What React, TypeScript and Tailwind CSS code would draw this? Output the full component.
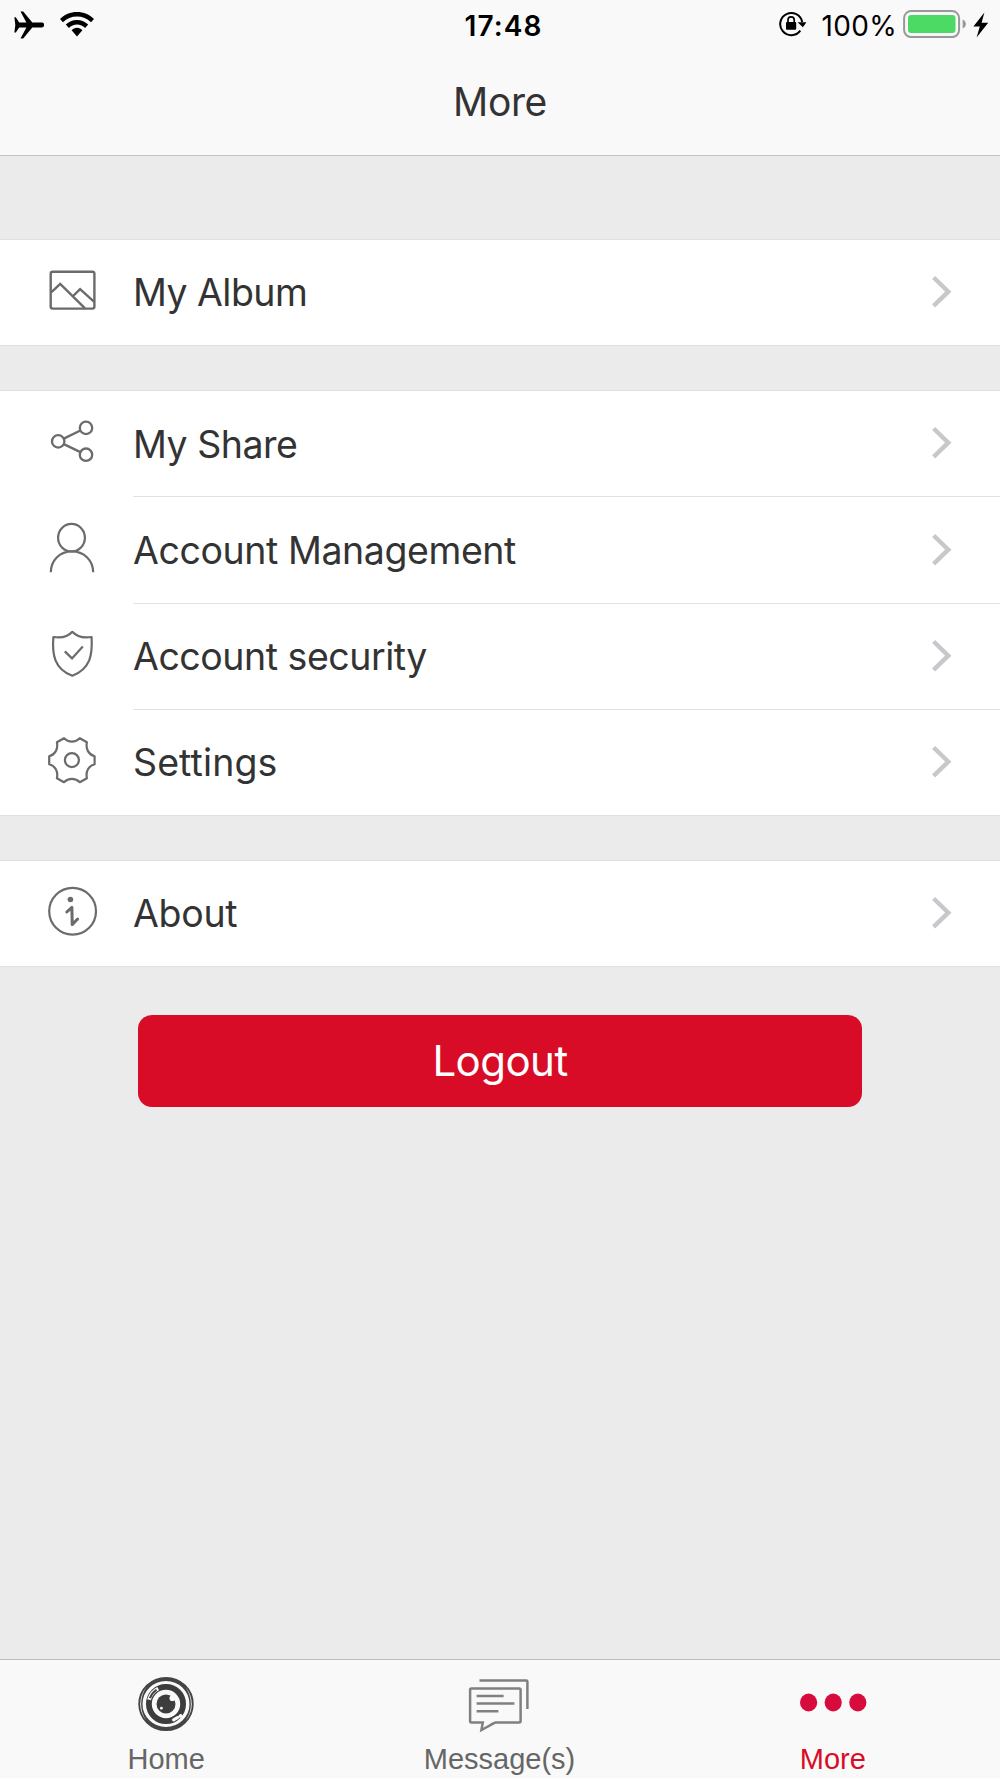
import type { FC, ReactNode } from 'react';

import cx from 'clsx';

type MenuItem = {
  id: string;
  label: string;
  labelClassName: string;
  icon: ReactNode;
};

type TabProps = {
  label: string;
  icon: ReactNode;
  active?: boolean;
};

const AlbumIcon: FC = () => (
  <svg className="w-14 h-14" viewBox="0 0 56 56" fill="none" stroke="#6b6b6b" strokeWidth="2.4">
    <rect x="6.7" y="7.8" width="43.7" height="36.8" rx="2" />
    <path d="M7.5 28.2 16.2 19.9 40.8 44.2M29.1 32 36.1 25.1 50.2 37.8" />
  </svg>
);

const ShareIcon: FC = () => (
  <svg className="w-14 h-14" viewBox="0 0 56 56" fill="none" stroke="#6b6b6b" strokeWidth="2.3">
    <circle cx="42" cy="11.9" r="6.2" />
    <circle cx="14.2" cy="25.4" r="6.2" />
    <circle cx="42" cy="38.7" r="6.2" />
    <path d="M19.8 22.6 36.4 14.5M19.8 28.1 36.4 36.1" />
  </svg>
);

const AccountIcon: FC = () => (
  <svg className="w-14 h-14" viewBox="0 0 56 56" fill="none" stroke="#6b6b6b" strokeWidth="2.2">
    <ellipse cx="27.5" cy="15.7" rx="13.4" ry="13.8" />
    <path d="M6.8 50.2C7 38 16 29.4 27.9 29.4S49 38 49.2 50.2" />
  </svg>
);

const SecurityIcon: FC = () => (
  <svg className="w-14 h-14" viewBox="0 0 56 56" fill="none" stroke="#6b6b6b" strokeWidth="2.2">
    <path
      strokeLinejoin="round"
      d="M28.3 3.8C24 8.6 17.6 10.4 9.4 9 8.6 18 8.7 25.2 11.5 32.4 14.6 40 20.5 45 28.3 47.7 36 45 42 40 45.2 32.4 48 25.2 48.1 18 47.6 9 39.2 10.4 32.7 8.6 28.3 3.8Z"
    />
    <path d="M20.8 23.4 28 30.4 38.8 18.4" />
  </svg>
);

const SettingsIcon: FC = () => (
  <svg
    className="w-14 h-14"
    viewBox="0 0 56 56"
    fill="none"
    stroke="#6b6b6b"
    strokeWidth="2.2"
    strokeLinejoin="round"
  >
    <path d="M20 4.2 12.9 8.2C14.4 15.5 10.8 20.8 5.2 22.2V30.2C10.8 31.6 14.4 36.9 12.9 44.2L20 48.2C24.4 43.7 31.4 43.7 35.8 48.2L42.9 44.2C41.4 36.9 45 31.6 50.6 30.2V22.2C45 20.8 41.4 15.5 42.9 8.2L35.8 4.2C31.4 8.7 24.4 8.7 20 4.2Z" />
    <circle cx="27.9" cy="26.1" r="7" />
  </svg>
);

const AboutIcon: FC = () => (
  <svg className="w-14 h-14" viewBox="0 0 56 56" fill="none" stroke="#6b6b6b">
    <circle cx="28.6" cy="26.3" r="23.4" strokeWidth="2.2" />
    <circle cx="26.4" cy="14.5" r="2.8" fill="#6b6b6b" stroke="none" />
    <path
      d="M22.8 27 27.9 22.4 28.2 39.6 33.6 34"
      strokeWidth="3"
      strokeLinecap="round"
      strokeLinejoin="round"
    />
  </svg>
);

const MENU: MenuItem[][] = [
  [{ id: 'album', label: 'My Album', labelClassName: 'tracking-[-0.55px]', icon: <AlbumIcon /> }],
  [
    { id: 'share', label: 'My Share', labelClassName: 'tracking-[-0.5px]', icon: <ShareIcon /> },
    {
      id: 'account',
      label: 'Account Management',
      labelClassName: 'tracking-[-0.42px]',
      icon: <AccountIcon />,
    },
    {
      id: 'security',
      label: 'Account security',
      labelClassName: 'tracking-[-0.47px]',
      icon: <SecurityIcon />,
    },
    {
      id: 'settings',
      label: 'Settings',
      labelClassName: 'tracking-[0.1px]',
      icon: <SettingsIcon />,
    },
  ],
  [{ id: 'about', label: 'About', labelClassName: 'tracking-[-0.3px]', icon: <AboutIcon /> }],
];

const StatusBar: FC = () => (
  <div className="grid grid-cols-[1fr_auto_1fr] items-center h-[50px] pl-3.5 pr-[11px] text-[28px] leading-none text-black">
    <div className="flex items-center gap-4 pb-px">
      <svg className="w-[30px] h-[28px]" viewBox="0 0 30 28">
        <path d="M.4 6.2H1.8L5.2 11.6H12.4L6.5.6H9.2L18.3 11.6H27.8C29.3 11.6 30.2 12.7 30.2 14S29.3 16.4 27.8 16.4H18.3L9.2 27.4H6.5L12.4 16.4H5.2L1.8 21.4H.4L1.3 14Z" />
      </svg>
      <svg className="w-[34px] h-[25px]" viewBox="0 0 34 25">
        <path d="M17 0C23.6 0 29.5 2.5 34 7L31 10.2C27.3 6.6 22.4 4.6 17 4.6S6.7 6.6 3 10.2L0 7C4.5 2.5 10.4 0 17 0Z" />
        <path d="M17 7.9C21.4 7.9 25.3 9.6 28.2 12.6L25.1 15.9C23 13.8 20.1 12.4 17 12.4S11 13.8 8.9 15.9L5.8 12.6C8.7 9.6 12.6 7.9 17 7.9Z" />
        <path d="M17 15.8C19.1 15.8 21 16.7 22.4 18.3L17 24.4 11.6 18.3C13 16.7 14.9 15.8 17 15.8Z" />
      </svg>
    </div>
    <span className="pl-1 pt-0.5 font-semibold tracking-[1.1px]">17:48</span>
    <div className="flex items-center justify-end">
      <svg className="w-7 h-[26px] mb-0.5" viewBox="0 0 28 26" fill="none">
        <path d="M21.3 19.6A11.1 11.1 0 1 1 23.2 11" stroke="#000" strokeWidth="2" />
        <path d="M18.6 11.2H27.4L23.9 16.2Z" fill="#000" />
        <rect x="7" y="11" width="10.2" height="7.8" rx="1" fill="#000" />
        <path d="M9 11.2V9A3.1 3.1 0 0 1 15.2 9V11.2" stroke="#000" strokeWidth="1.7" />
      </svg>
      <span className="ml-[15px] pt-0.5 tracking-[0.3px]">100%</span>
      <svg className="w-[63px] h-7 ml-1.5 mb-0.5" viewBox="0 0 63 28">
        <rect x="1.1" y="1.1" width="55" height="26" rx="7" fill="none" stroke="#999" strokeWidth="2" />
        <rect x="5" y="5" width="47.5" height="18" rx="3" fill="#4cd964" />
        <path d="M59.6 9.4C61.8 10.4 62.9 12 62.9 14S61.8 17.6 59.6 18.6Z" fill="#999" />
      </svg>
      <svg className="w-4 h-[26px] ml-[7px] mb-px" viewBox="0 0 16 26">
        <path d="M11.4.6.4 14.6H6.8L3.6 25.4 15.2 10.8H8.6Z" />
      </svg>
    </div>
  </div>
);

const MenuRow: FC<{ item: MenuItem; last: boolean }> = ({ item, last }) => (
  <li
    className={cx({
      'flex pl-11': true,
      'h-[104.7px]': last,
      'h-[106.3px]': !last,
    })}
  >
    <span className="flex items-center shrink-0 w-[89px] pb-px">{item.icon}</span>
    <button
      type="button"
      className={cx({
        'flex items-center justify-between grow pr-[46px] pt-px text-left': true,
        'border-b border-[#e2e2e2]': !last,
      })}
    >
      <span className={cx('text-[37.5px] leading-none', item.labelClassName)}>{item.label}</span>
      <svg className="w-6 h-9" viewBox="0 0 24 36" fill="none">
        <path d="M3.6 2.5 18.3 16.7 3.6 30.9" stroke="#c7c7cc" strokeWidth="4.4" />
      </svg>
    </button>
  </li>
);

const HomeIcon: FC = () => (
  <svg className="w-14 h-14" viewBox="-28 -28 56 56" fill="none">
    <ellipse rx="25.6" ry="25" stroke="#444" strokeWidth="4.2" />
    <path
      d="M-19.4-17A25.8 25.8 0 0 0-19.4 17A29 29 0 0 1-19.4-17ZM19.4-17A25.8 25.8 0 0 1 19.4 17A29 29 0 0 0 19.4-17Z"
      fill="#f9f9f9"
    />
    <circle r="17.1" stroke="#3d3d3d" strokeWidth="5.8" />
    <path d="M-17-4.2A17.4 17.4 0 0 1-7.8-15.4" stroke="#f9f9f9" strokeWidth="3.8" />
    <path d="M-16.1-5.8A17 17 0 0 1-9.4-14.2" stroke="#3d3d3d" strokeWidth="1.9" />
    <path d="M7.6 15.8 11.4 13.6M14 12.2 14.8 11.6" stroke="#f9f9f9" strokeWidth="3.2" strokeLinecap="round" />
    <circle r="9.5" fill="#3d3d3d" />
    <circle cx="6.4" cy="-5.8" r="2.9" fill="#f9f9f9" />
    <circle cx="-4.6" cy="4.2" r="1.4" fill="#f9f9f9" />
  </svg>
);

const MessagesIcon: FC = () => (
  <svg className="w-16 h-14 mr-[3px]" viewBox="0 0 64 56" fill="none" stroke="#808080" strokeWidth="2.5">
    <path d="M13.5 4.6H60.2Q61.4 4.6 61.4 5.8V33" />
    <path d="M16.8 46.4H5.4Q4.1 46.4 4.1 45V13.8Q4.1 12.4 5.4 12.4H53.2Q54.6 12.4 54.6 13.8V45Q54.6 46.4 53.2 46.4H29.4L15.4 54Z" />
    <path d="M10.6 20H37.6M10.6 27.6H48.4M10.6 35.3H32.4" />
    <path d="M26 46.4H31L15.6 54.6Z" fill="#808080" stroke="none" />
  </svg>
);

const MoreIcon: FC = () => (
  <svg className="w-[68px] h-14" viewBox="0 0 68 56" fill="#d80c3c">
    <ellipse cx="9.6" cy="26.5" rx="8.6" ry="9" />
    <ellipse cx="34.2" cy="26.5" rx="8.6" ry="9" />
    <ellipse cx="58.8" cy="26.5" rx="8.6" ry="9" />
  </svg>
);

const Tab: FC<TabProps> = ({ label, icon, active = false }) => (
  <button
    type="button"
    className={cx({
      'flex flex-col items-center w-[333.33px] pt-4 pr-px font-["Liberation_Sans",Arial,sans-serif] text-[29px] leading-8': true,
      'text-[#666]': !active,
      'text-[#d80c26]': active,
    })}
  >
    {icon}
    <span className="mt-[11px]">{label}</span>
  </button>
);

const App: FC = () => (
  <div className="flex flex-col w-[1000px] h-[1778px] overflow-hidden bg-[#ebebeb] font-[Inter,sans-serif] text-[#333]">
    <header className="h-[156px] bg-[#f9f9f9] border-b border-[#c4c4c4]">
      <StatusBar />
      <h1 className="mt-[31px] text-center text-[39px] leading-[42px] tracking-[-0.4px]">More</h1>
    </header>

    <main className="grow pt-[83px]">
      <div className="flex flex-col gap-[44.5px]">
        {MENU.map((group) => (
          <ul key={group[0].id} className="bg-white border-y border-[#e0e0e0]">
            {group.map((item, index) => (
              <MenuRow key={item.id} item={item} last={index === group.length - 1} />
            ))}
          </ul>
        ))}
      </div>
      <div className="flex justify-center mt-12">
        <button
          type="button"
          className="w-[724px] h-[92px] pt-px rounded-[14px] bg-[#d80c26] text-[42px] leading-none tracking-[-0.55px] text-white"
        >
          Logout
        </button>
      </div>
    </main>

    <nav className="flex h-[119px] bg-[#f9f9f9] border-t border-[#bdbdbd]">
      <Tab label="Home" icon={<HomeIcon />} />
      <Tab label="Message(s)" icon={<MessagesIcon />} />
      <Tab label="More" icon={<MoreIcon />} active />
    </nav>
  </div>
);

export default App;
